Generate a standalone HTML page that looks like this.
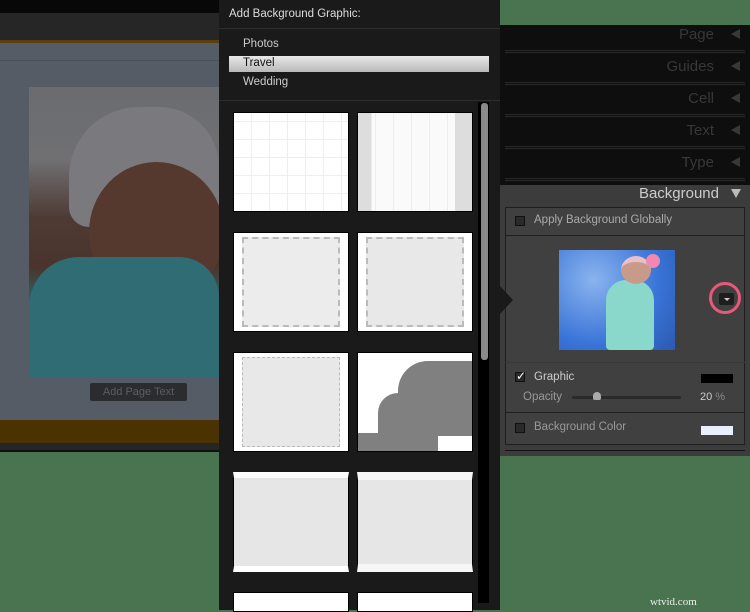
<!DOCTYPE html><html><head><style>
*{margin:0;padding:0;box-sizing:border-box}
body{width:750px;height:610px;background:#4a7450;position:relative;overflow:hidden;font-family:"Liberation Sans",sans-serif}
.a{position:absolute}
.th{position:absolute;background:#fff;border:1px solid #000}
.hd{position:absolute;left:500px;width:250px;height:32px;background:#0e0e0e;color:#383838;font-size:15px;text-align:right;padding-right:36px;line-height:18px;padding-top:1px}
.hd:after{content:"";position:absolute;right:10px;top:4px;border-right:9px solid #383838;border-top:5px solid transparent;border-bottom:5px solid transparent}
.hd i{position:absolute;left:5px;right:5px;bottom:4px;height:3px;border-top:1px solid #2a2a2a;border-bottom:1px solid #2a2a2a}
</style></head><body>
<div class="a" style="left:0;top:0;width:219px;height:452px;background:#262626;border-bottom:2px solid #111"></div>
<div class="a" style="left:0;top:0;width:219px;height:13px;background:#080808"></div>
<div class="a" style="left:0;top:40px;width:219px;height:3px;background:#5a4010"></div>
<div class="a" style="left:0;top:43px;width:219px;height:377px;background:#555c66"></div>
<div class="a" style="left:0;top:60px;width:219px;height:1px;background:#4a525e"></div>
<div class="a" style="left:29px;top:87px;width:190px;height:291px;overflow:hidden;background:#6e7074">
<div class="a" style="left:0;top:0;width:190px;height:291px;background:linear-gradient(180deg,#6a6c70 0%,#707072 25%,#4e3a34 45%,#4a342c 62%,#2a6a70 75%,#286068 100%)"></div>
<div class="a" style="left:40px;top:20px;width:150px;height:120px;border-radius:70px 60px 20px 20px;background:#7a7a7e"></div>
<div class="a" style="left:60px;top:75px;width:135px;height:140px;border-radius:50%;background:#55392e"></div>
<div class="a" style="left:0;top:170px;width:190px;height:121px;border-radius:50px 40px 0 0;background:#2f6c74"></div>
</div>
<div class="a" style="left:90px;top:383px;width:97px;height:18px;background:#2a2c30;border-radius:2px;color:#5a5e64;font-size:11px;text-align:center;line-height:18px">Add Page Text</div>
<div class="a" style="left:0;top:420px;width:219px;height:23px;background:#4a3300"></div>
<div class="a" style="left:219px;top:0;width:281px;height:610px;background:#1a1a1a"></div>
<div class="a" style="left:229px;top:8px;color:#ddd;font-size:11.5px">Add Background Graphic:</div>
<div class="a" style="left:219px;top:28px;width:281px;height:1px;background:#2e2e2e"></div>
<div class="a" style="left:243px;top:38px;color:#ccc;font-size:11.5px">Photos</div>
<div class="a" style="left:229px;top:56px;width:260px;height:16px;background:linear-gradient(#e8e8e8,#b8b8b8)"></div>
<div class="a" style="left:243px;top:57px;color:#111;font-size:11.5px">Travel</div>
<div class="a" style="left:243px;top:76px;color:#ccc;font-size:11.5px">Wedding</div>
<div class="a" style="left:219px;top:100px;width:281px;height:1px;background:#2e2e2e"></div>
<div class="a" style="left:478px;top:102px;width:11px;height:501px;background:#000"></div>
<div class="a" style="left:481px;top:103px;width:7px;height:257px;background:#8a8a8a;border-radius:3px"></div>
<div class="th" style="left:233px;top:112px;width:116px;height:100px;background:repeating-linear-gradient(90deg,transparent 0 17px,#eee 17px 18px),repeating-linear-gradient(0deg,#fff 0 17px,#eee 17px 18px)"></div>
<div class="th" style="left:357px;top:112px;width:116px;height:100px;background:linear-gradient(90deg,#ddd 0 12%,transparent 12% 85%,#ddd 85%),repeating-linear-gradient(90deg,transparent 0 17px,#eee 17px 18px),#fafafa"></div>
<div class="th" style="left:233px;top:232px;width:116px;height:100px"><div class="a" style="left:8px;top:4px;right:8px;bottom:4px;border:2px dashed #bbb;background:#ececec"></div></div>
<div class="th" style="left:357px;top:232px;width:116px;height:100px"><div class="a" style="left:8px;top:4px;right:8px;bottom:4px;border:2px dashed #bbb;background:#e8e8e8"></div></div>
<div class="th" style="left:233px;top:352px;width:116px;height:100px"><div class="a" style="left:8px;top:4px;right:8px;bottom:4px;border:1px dashed #bbb;background:#e8e8e8"></div></div>
<div class="th" style="left:357px;top:352px;width:116px;height:100px;background:#fff;overflow:hidden"><div class="a" style="left:40px;top:8px;width:76px;height:75px;background:#808080;border-radius:30px 0 0 10px"></div><div class="a" style="left:20px;top:40px;width:60px;height:60px;background:#808080;border-radius:20px 0 0 0"></div><div class="a" style="left:0;top:80px;width:40px;height:20px;background:#808080"></div></div>
<div class="th" style="left:233px;top:472px;width:116px;height:100px;background:#e6e6e6;border-top:6px solid #fff;border-bottom:6px solid #fff"></div>
<div class="th" style="left:357px;top:472px;width:116px;height:100px;background:#e6e6e6;border-top:8px solid #f6f6f6;border-bottom:8px solid #f6f6f6"></div>
<div class="th" style="left:233px;top:592px;width:116px;height:20px"></div>
<div class="th" style="left:357px;top:592px;width:116px;height:20px"></div>
<div class="a" style="left:500px;top:25px;width:250px;height:431px;background:#3c3c3c"></div>
<div class="hd" style="top:25px">Page<i></i></div>
<div class="hd" style="top:57px">Guides<i></i></div>
<div class="hd" style="top:89px">Cell<i></i></div>
<div class="hd" style="top:121px">Text<i></i></div>
<div class="hd" style="top:153px">Type<i></i></div>
<div class="a" style="left:500px;top:185px;width:219px;text-align:right;color:#ccc;font-size:15px">Background</div>
<div class="a" style="left:731px;top:189px;border-top:9px solid #bbb;border-left:5px solid transparent;border-right:5px solid transparent"></div>
<div class="a" style="left:505px;top:207px;width:240px;height:238px;border:1px solid #1e1e1e;background:#404040"></div>
<div class="a" style="left:505px;top:235px;width:240px;height:1px;background:#1e1e1e"></div>
<div class="a" style="left:505px;top:412px;width:240px;height:1px;background:#1e1e1e"></div>
<div class="a" style="left:505px;top:362px;width:240px;height:1px;background:#383838"></div>
<div class="a" style="left:515px;top:216px;width:10px;height:10px;background:#2a2a2a;border:1px solid #111"></div>
<div class="a" style="left:534px;top:214px;color:#aaa;font-size:11.5px">Apply Background Globally</div>
<div class="a" style="left:559px;top:250px;width:116px;height:100px;background:radial-gradient(circle at 30% 30%,#8ab4ee,#3a74d8 60%,#2a5ab0)"></div>
<div class="a" style="left:606px;top:280px;width:48px;height:70px;background:#8ad8cc;border-radius:20px 20px 4px 4px"></div>
<div class="a" style="left:621px;top:256px;width:30px;height:28px;background:#c89a8a;border-radius:50%;border-top:6px solid #e8c0c8"></div>
<div class="a" style="left:646px;top:254px;width:14px;height:14px;background:#f088b0;border-radius:50%"></div>
<div class="a" style="left:709px;top:282px;width:32px;height:32px;border:3px solid #e85878;border-radius:50%"></div>
<div class="a" style="left:719px;top:293px;width:15px;height:12px;background:#1e1e1e;border-radius:2px"></div>
<div class="a" style="left:724px;top:298px;border-top:3px solid #ccc;border-left:3px solid transparent;border-right:3px solid transparent"></div>
<div class="a" style="left:499px;top:285px;border-left:14px solid #1a1a1a;border-top:15px solid transparent;border-bottom:15px solid transparent"></div>
<div class="a" style="left:515px;top:372px;width:10px;height:10px;background:#2a2a2a;border:1px solid #111;color:#fff;font-size:12px;line-height:6px">✓</div>
<div class="a" style="left:534px;top:371px;color:#ccc;font-size:11.5px">Graphic</div>
<div class="a" style="left:701px;top:374px;width:32px;height:9px;background:#000"></div>
<div class="a" style="left:523px;top:391px;color:#999;font-size:11.5px">Opacity</div>
<div class="a" style="left:572px;top:396px;width:109px;height:3px;background:#2a2a2a;border-radius:2px"></div>
<div class="a" style="left:593px;top:392px;width:8px;height:8px;background:#aaa;border-radius:50% 50% 2px 2px"></div>
<div class="a" style="left:700px;top:391px;color:#ccc;font-size:11px">20 <span style="color:#888">%</span></div>
<div class="a" style="left:515px;top:423px;width:10px;height:10px;background:#2a2a2a;border:1px solid #111"></div>
<div class="a" style="left:534px;top:421px;color:#999;font-size:11.5px">Background Color</div>
<div class="a" style="left:701px;top:426px;width:32px;height:9px;background:#e8eefc"></div>
<div class="a" style="left:505px;top:450px;width:240px;height:1px;background:#111"></div>
<div class="a" style="left:650px;top:596px;color:#eee;font-size:11px;font-family:'Liberation Serif',serif">wtvid.com</div>
</body></html>
